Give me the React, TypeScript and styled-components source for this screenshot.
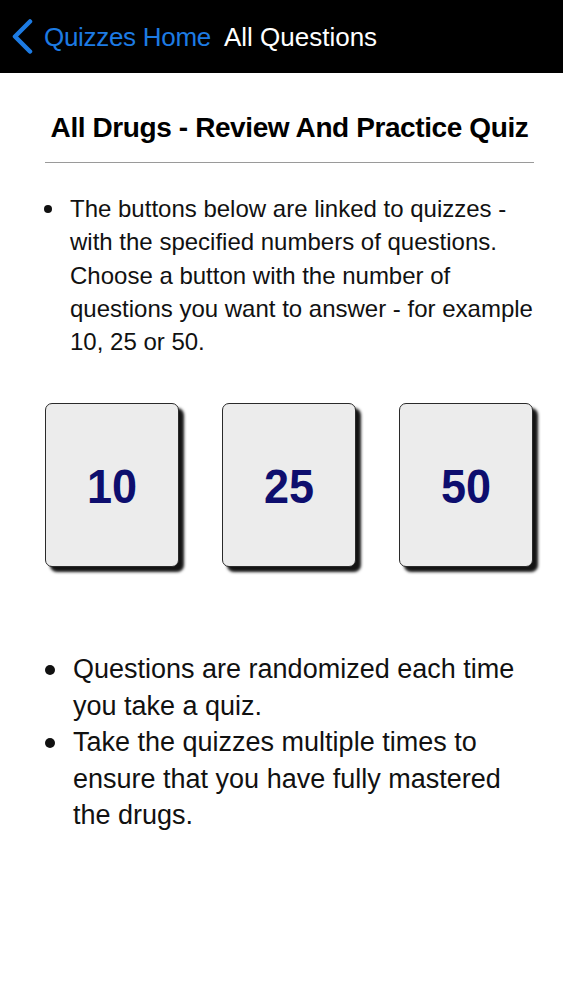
import styled, { createGlobalStyle } from "styled-components";

const GlobalStyle = createGlobalStyle`
  html, body {
    margin: 0;
    padding: 0;
    background: #ffffff;
  }
  body {
    font-family: "Liberation Sans", Arial, Helvetica, sans-serif;
    color: #111111;
  }
`;

const Page = styled.div`
  width: 563px;
  min-height: 1000px;
  background: #ffffff;
`;

const NavBar = styled.header`
  height: 73px;
  background: #000000;
  display: flex;
  align-items: center;
  padding: 1px 0 0 12px;
  box-sizing: border-box;
`;

const BackLink = styled.a`
  display: flex;
  align-items: center;
  gap: 10px;
  color: #1d7be3;
  font-size: 26px;
  letter-spacing: -0.3px;
  text-decoration: none;
  cursor: pointer;
`;

const NavTitle = styled.span`
  color: #ffffff;
  font-size: 26px;
  margin-left: 13px;
`;

const Content = styled.main`
  padding: 38px 29px 0 45px;
  display: flex;
  flex-direction: column;
`;

const Heading = styled.h1`
  margin: 0;
  font-size: 28px;
  line-height: 34px;
  font-weight: 700;
  letter-spacing: -0.4px;
  color: #000000;
  text-align: center;
`;

const Rule = styled.hr`
  margin: 17px 0 0;
  border: none;
  border-top: 1.5px solid #9a9a9a;
`;

const BulletList = styled.ul<{ $top: number }>`
  list-style: none;
  margin: ${(p) => p.$top}px -6px 0 -2px;
  padding: 0;
`;

const Item = styled.li<{ $size: number; $lh: number }>`
  display: flex;
  font-size: ${(p) => p.$size}px;
  line-height: ${(p) => p.$lh}px;
`;

const DotCol = styled.span<{ $width: number; $lh: number }>`
  flex: 0 0 ${(p) => p.$width}px;
  height: ${(p) => p.$lh}px;
  display: flex;
  align-items: center;
`;

const Dot = styled.span<{ $d: number; $offset: number }>`
  width: ${(p) => p.$d}px;
  height: ${(p) => p.$d}px;
  margin-left: ${(p) => p.$offset}px;
  border-radius: 50%;
  background: #111111;
`;

const ItemText = styled.span`
  flex: 1;
`;

const ButtonRow = styled.div`
  margin-top: 45px;
  display: grid;
  grid-template-columns: repeat(3, 134px);
  column-gap: 43px;
`;

const QuizButton = styled.button`
  height: 164px;
  padding: 0;
  background: #ececec;
  border: 1.5px solid #2a2a2a;
  border-radius: 7px;
  box-shadow: 5px 5px 3px rgba(0, 0, 0, 0.92);
  display: flex;
  align-items: center;
  justify-content: center;
  cursor: pointer;
`;

const Count = styled.span`
  display: inline-block;
  font-family: "Liberation Sans", Arial, sans-serif;
  font-size: 45px;
  font-weight: 700;
  color: #0e0e6e;
  transform: scaleY(1.08);
  margin-top: 3px;
`;

const Chevron = () => (
  <svg width="22" height="36" viewBox="0 0 22 36" fill="none">
    <path
      d="M18 2.5 L3 17.5 L18 32.5"
      stroke="#1d7be3"
      strokeWidth="4.5"
      strokeLinecap="round"
      strokeLinejoin="round"
    />
  </svg>
);

const topNotes = [
  "The buttons below are linked to quizzes - with the specified numbers of questions. Choose a button with the number of questions you want to answer - for example 10, 25 or 50.",
];

const bottomNotes = [
  "Questions are randomized each time you take a quiz.",
  "Take the quizzes multiple times to ensure that you have fully mastered the drugs.",
];

const counts = [10, 25, 50];

export default function App() {
  return (
    <>
      <GlobalStyle />
      <Page>
        <NavBar>
          <BackLink>
            <Chevron />
            Quizzes Home
          </BackLink>
          <NavTitle>All Questions</NavTitle>
        </NavBar>
        <Content>
          <Heading>All Drugs - Review And Practice Quiz</Heading>
          <Rule />
          <BulletList $top={29}>
            {topNotes.map((t) => (
              <Item key={t} $size={24} $lh={33.3}>
                <DotCol $width={27} $lh={33.3}>
                  <Dot $d={8} $offset={0.5} />
                </DotCol>
                <ItemText>{t}</ItemText>
              </Item>
            ))}
          </BulletList>
          <ButtonRow>
            {counts.map((n) => (
              <QuizButton key={n}>
                <Count>{n}</Count>
              </QuizButton>
            ))}
          </ButtonRow>
          <BulletList $top={84}>
            {bottomNotes.map((t) => (
              <Item key={t} $size={27} $lh={36.5}>
                <DotCol $width={30} $lh={36.5}>
                  <Dot $d={10} $offset={2} />
                </DotCol>
                <ItemText>{t}</ItemText>
              </Item>
            ))}
          </BulletList>
        </Content>
      </Page>
    </>
  );
}
